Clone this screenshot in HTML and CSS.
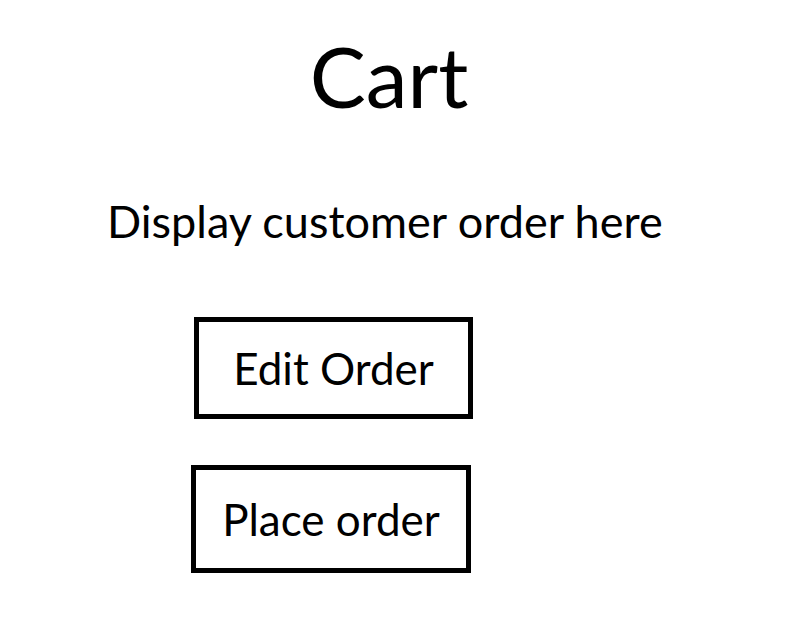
FILE: index.html
```html
<!DOCTYPE html>
<html lang="en">
<head>
  <meta charset="UTF-8" />
  <meta name="viewport" content="width=device-width, initial-scale=1.0"/>
  <title>Cart</title>
  <link rel="stylesheet" href="styles.css">
</head>
<body>
  <div class="page">
    <h1 class="title">Cart</h1>
    <p class="order">Display customer order here</p>

    <div class="actions">
      <button type="button" class="btn btn-edit">Edit Order</button>
      <button type="button" class="btn btn-place">Place order</button>
    </div>
  </div>
</body>
</html>
```

FILE: styles.css
```css
body {
  font-family: Lato, "Open Sans", sans-serif;
  background: #fff;
  color: #000;
  margin: 0;
  padding: 0;
}
.page {
  width: 790px;
  height: 632px;
  display: flex;
  flex-direction: column;
}
.title {
  margin: 26px 0 0;
  padding-right: 12px;
  font-size: 84px;
  font-weight: normal;
  line-height: 100px;
  text-align: center;
}
.order {
  margin: 70px 0 0 107px;
  font-size: 45px;
  line-height: 50px;
}
.actions {
  display: flex;
  flex-direction: column;
  align-items: flex-start;
}
.btn {
  font-family: inherit;
  font-size: 44px;
  background: #fff;
  color: #000;
  border: 5px solid #000;
  border-radius: 0;
  padding: 0;
  cursor: pointer;
}
.btn-edit {
  margin: 71px 0 0 194px;
  width: 279px;
  height: 102px;
}
.btn-place {
  margin: 46px 0 0 191px;
  width: 280px;
  height: 108px;
}
```
